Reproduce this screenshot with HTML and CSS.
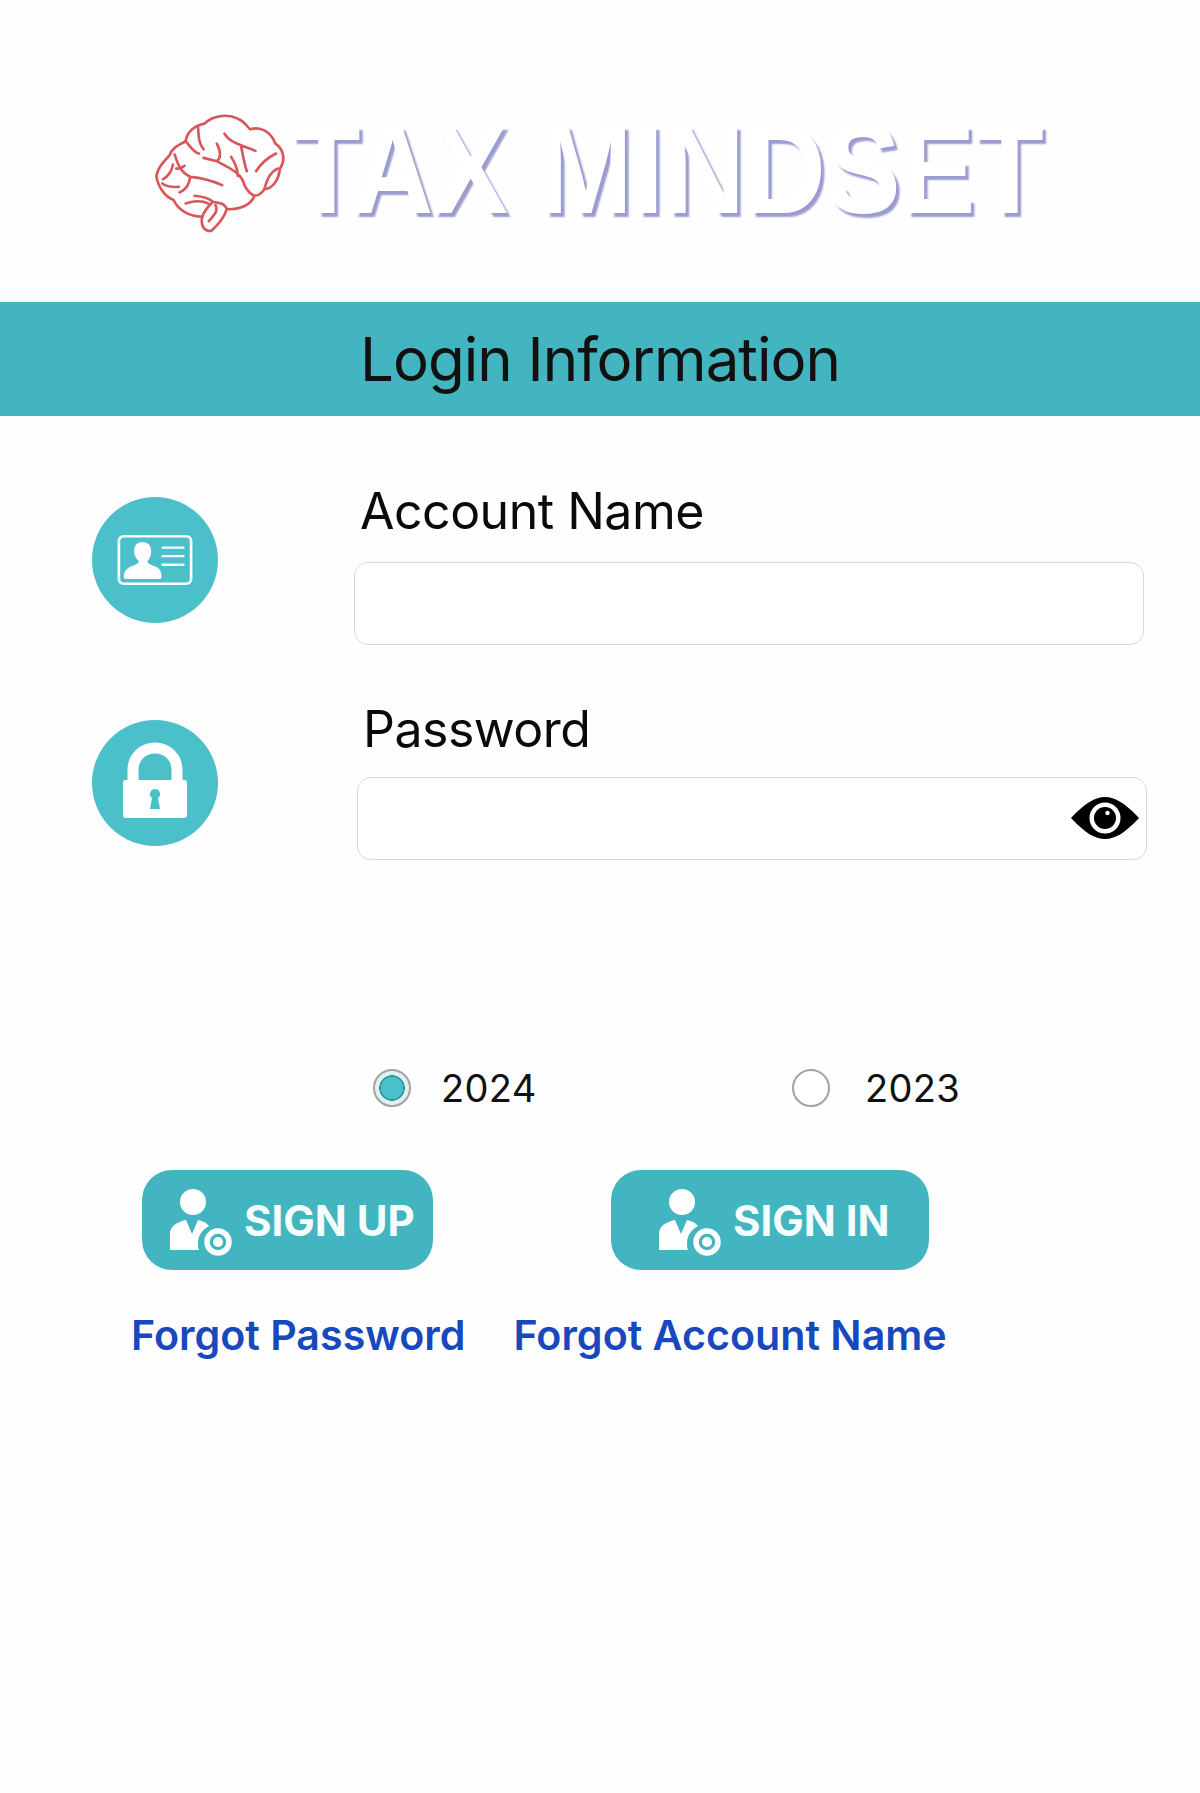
FILE: index.html
```html
<!DOCTYPE html>
<html lang="en">
<head>
<meta charset="utf-8">
<title>Login Information</title>
<link rel="stylesheet" href="styles.css">
</head>
<body>
<main class="page">
  <header class="logo">
    <svg class="brain" viewBox="70 70 400 370" aria-hidden="true">
      <g fill="#fff" stroke="#d9575a" stroke-width="8" stroke-linejoin="round" stroke-linecap="round">
        <path d="M80 262 C84 238 100 222 120 200 C128 176 148 170 168 158 C172 128 198 110 225 105 C245 85 290 72 325 90 C345 98 352 112 362 122 C395 112 425 130 438 165 C462 180 470 215 452 240 C448 275 430 300 405 302 C395 318 385 322 375 322 C365 350 330 365 292 362 C285 385 265 410 245 428 C225 428 212 415 218 385 C180 385 145 365 132 335 C105 325 85 295 80 262 Z"/>
        <path fill="none" d="M205 112 C208 140 205 160 222 182 M168 158 C182 172 190 190 208 195 M285 135 C300 162 335 168 378 187 M262 165 C272 185 278 205 262 218 L222 208 M262 218 C300 240 335 250 345 290 C352 305 360 315 375 322 M335 172 C340 200 345 225 352 248 M305 205 C318 225 325 240 325 262 M440 195 C420 205 395 225 380 248 M445 240 C425 250 415 265 405 302 M130 228 C126 250 118 262 100 272 M135 198 C145 225 150 250 182 265 C178 290 170 302 150 312 M182 265 C215 268 245 275 278 290 M140 240 C150 242 156 240 165 232 M195 322 C225 325 240 330 250 340 C235 355 225 365 218 385 M250 340 C275 345 285 345 292 362 M258 350 C264 365 262 372 238 398 M98 285 C115 297 130 297 148 295 M168 345 C190 338 215 335 235 345"/>
      </g>
    </svg>
    <span class="wordmark">TAX MINDSET</span>
  </header>

  <h1 class="title-bar">Login Information</h1>

  <section class="form">
    <div class="row">
      <div class="circle">
        <svg class="circle-icon" viewBox="0 0 80 54" aria-hidden="true">
          <rect x="2" y="2" width="76" height="50" rx="5" fill="none" stroke="#fff" stroke-width="2.8"/>
          <path fill="#fff" d="M27 8c6 0 9 4 9 10 0 5-2 8-4 10 0 3 4 4 9 6 4 2 6 5 6 11 0 1-1 2-2 2H9c-1 0-2-1-2-2 0-6 3-9 7-11 5-2 9-3 9-6-2-2-5-5-5-10 0-6 3-10 9-10z"/>
          <path stroke="#fff" stroke-width="2.4" d="M47 14h24M47 23h24M47 32h24"/>
        </svg>
      </div>
      <div class="field field-account">
        <label class="label" for="account">Account Name</label>
        <input class="input" id="account" type="text">
      </div>
    </div>
    <div class="row row-password">
      <div class="circle">
        <svg class="lock-icon" viewBox="0 0 66 76" aria-hidden="true">
          <path fill="none" stroke="#fff" stroke-width="11" d="M11 38V28C11 15 21 6 33 6s22 9 22 22v10"/>
          <path fill="#fff" fill-rule="evenodd" d="M4 38h58a3 3 0 0 1 3 3v32a3 3 0 0 1-3 3H4a3 3 0 0 1-3-3V41a3 3 0 0 1 3-3zM33 47a5 5 0 0 0-3 9l-2 11h10l-2-11a5 5 0 0 0-3-9z"/>
        </svg>
      </div>
      <div class="field field-password">
        <label class="label" for="password">Password</label>
        <div class="password-box">
          <input class="input" id="password" type="password">
          <svg class="eye" viewBox="0 0 68 42" aria-hidden="true">
            <path fill="#000" d="M0 21C14 6 24 0 34 0s20 6 34 21C54 36 44 42 34 42S14 36 0 21z"/>
            <circle cx="34" cy="21" r="15.5" fill="#fff"/>
            <circle cx="34" cy="21" r="11" fill="#000"/>
            <circle cx="36.5" cy="16" r="2.2" fill="#fff"/>
          </svg>
        </div>
      </div>
    </div>

    <div class="years">
      <label class="year year-current"><span class="radio radio-on"></span>2024</label>
      <label class="year year-prior"><span class="radio"></span>2023</label>
    </div>

    <div class="buttons">
      <button class="btn btn-up" type="button">
        <svg class="btn-icon" viewBox="0 0 66 68" aria-hidden="true">
          <circle cx="25" cy="14" r="13" fill="#fff"/>
          <path fill="#fff" d="M2 62V46c0-8 7-12 16-14l6 14 6-14c5 1 9 3 11 6-7 4-11 10-11 17 0 3 0 5 1 7z"/>
          <circle cx="50" cy="54" r="11" fill="none" stroke="#fff" stroke-width="5.5"/>
          <circle cx="50" cy="54" r="5" fill="#fff"/>
        </svg>
        SIGN UP
      </button>
      <button class="btn btn-in" type="button">
        <svg class="btn-icon" viewBox="0 0 66 68" aria-hidden="true">
          <circle cx="25" cy="14" r="13" fill="#fff"/>
          <path fill="#fff" d="M2 62V46c0-8 7-12 16-14l6 14 6-14c5 1 9 3 11 6-7 4-11 10-11 17 0 3 0 5 1 7z"/>
          <circle cx="50" cy="54" r="11" fill="none" stroke="#fff" stroke-width="5.5"/>
          <circle cx="50" cy="54" r="5" fill="#fff"/>
        </svg>
        SIGN IN
      </button>
    </div>

    <nav class="links">
      <a class="link" href="#">Forgot Password</a>
      <a class="link" href="#">Forgot Account Name</a>
    </nav>
  </section>
</main>
</body>
</html>
```
FILE: styles.css
```css
* { box-sizing: border-box; }
html, body { margin: 0; padding: 0; }
body {
  background: #fefefe;
  color: #111;
  font-family: Inter, "Liberation Sans", sans-serif;
}
.page { width: 1200px; height: 1793px; overflow: hidden; }

.logo {
  height: 302px;
  padding: 112px 0 0 153px;
  display: flex;
  align-items: flex-start;
  gap: 6px;
}
.brain { width: 133px; height: 123px; flex: none; filter: blur(0.6px); }
.wordmark {
  font-family: "Liberation Sans", sans-serif;
  font-weight: 700;
  font-size: 126px;
  line-height: 116px;
  white-space: nowrap;
  color: #fff;
  text-shadow: 4px 4px 2px #9a9cd0;
  transform: scaleX(0.89);
  transform-origin: left top;
  filter: blur(0.7px);
}

.title-bar {
  margin: 0;
  height: 114px;
  background: #43b5c1;
  display: flex;
  align-items: center;
  justify-content: center;
  font-size: 60px;
  font-weight: 400;
  letter-spacing: -1px;
  color: #111;
}

.form { padding: 60px 0 0 92px; }
.row { display: flex; align-items: flex-start; height: 215px; }
.row-password { height: 311px; }
.circle {
  width: 126px;
  height: 126px;
  flex: none;
  border-radius: 50%;
  background: #4bbfca;
  margin-top: 21px;
  display: flex;
  align-items: center;
  justify-content: center;
}
.row-password .circle { margin-top: 29px; }
.circle-icon { width: 76px; height: 52px; }
.lock-icon { width: 66px; height: 76px; margin-bottom: 6px; }

.field { width: 790px; display: flex; flex-direction: column; }
.field-account { margin-left: 136px; }
.field-password { margin-left: 139px; }
.label {
  font-size: 50px;
  line-height: 60px;
  height: 86px;
  padding: 5px 0 0 6px;
  color: #0a0a0a;
  letter-spacing: -0.5px;
}
.row-password .label { padding-top: 8px; }
.input {
  display: block;
  width: 100%;
  height: 83px;
  border: 1.5px solid #d8d8d8;
  border-radius: 14px;
  background: #fff;
  outline: none;
}
.password-box { position: relative; }
.eye { position: absolute; right: 8px; top: 20px; width: 68px; height: 42px; filter: blur(0.5px); }

.years { display: flex; padding: 62px 0 0 281px; font-size: 38px; }
.year { display: flex; align-items: center; gap: 30px; color: #111; letter-spacing: 0.3px; line-height: 48px; }
.year-current { width: 419px; }
.year-prior { gap: 35px; }
.radio {
  width: 38px;
  height: 38px;
  border-radius: 50%;
  border: 2px solid #a2a2a2;
  background: #fff;
  flex: none;
}
.radio-on {
  background: radial-gradient(circle, #4cc0cb 0 11px, #2f8e98 11.5px 12.5px, #dff3f5 13px);
}

.buttons { display: flex; padding: 58px 0 0 50px; gap: 178px; }
.btn {
  height: 100px;
  border: 0;
  border-radius: 30px;
  background: #43b5c1;
  color: #f6fdfd;
  font-family: Inter, "Liberation Sans", sans-serif;
  font-size: 42px;
  font-weight: 700;
  display: flex;
  align-items: center;
  gap: 10px;
  padding: 0 0 0 26px;
}
.btn-up { width: 291px; }
.btn-in { width: 318px; padding-left: 46px; }
.btn-icon { width: 66px; height: 68px; flex: none; margin-top: 4px; filter: blur(0.5px); }

.links { display: flex; gap: 48px; padding: 40px 0 0 39px; }
.link {
  color: #1748bd;
  font-size: 41.2px;
  line-height: 50px;
  font-weight: 600;
  text-decoration: none;
  white-space: nowrap;
}
```
